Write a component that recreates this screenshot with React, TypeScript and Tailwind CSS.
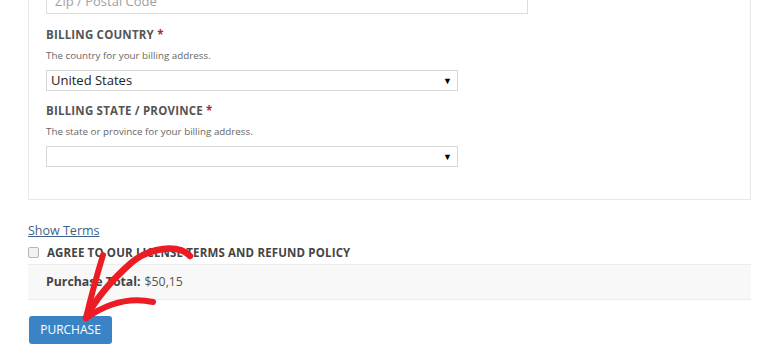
export default function App() {
  return (
    <div className="relative h-[360px] w-[775px] overflow-hidden bg-white font-['Open_Sans',sans-serif]">
      <div className="px-[28px]">
        {/* billing fieldset, top cut off by the viewport */}
        <div className="-mt-[30px] h-[230px] w-[723px] border border-[#e8e8e8] pl-[17px] pt-[19px]">
          <div className="flex h-[24px] w-[482px] items-center border border-[#dcdcdc] px-[8px] text-[13px] text-[#a0a0a0]">
            Zip / Postal Code
          </div>

          <div className="mt-[13px] text-[11.5px] font-bold leading-[16px] tracking-[0.2px] text-[#555]">
            BILLING COUNTRY <span className="text-[#b5232e]">*</span>
          </div>
          <div className="mt-[6px] text-[9.8px] leading-[14px] text-[#666]">
            The country for your billing address.
          </div>
          <div className="mt-[7px] flex h-[21px] w-[412px] items-center justify-between border border-[#d8d8d8] pl-[4px] pr-[5px] text-[13px] text-[#222]">
            <span>United States</span>
            <span className="text-[9px] text-black">▼</span>
          </div>

          <div className="mt-[12px] text-[11.5px] font-bold leading-[16px] tracking-[0.2px] text-[#555]">
            BILLING STATE / PROVINCE <span className="text-[#b5232e]">*</span>
          </div>
          <div className="mt-[6px] text-[9.8px] leading-[14px] text-[#666]">
            The state or province for your billing address.
          </div>
          <div className="mt-[7px] flex h-[21px] w-[412px] items-center justify-end border border-[#d8d8d8] pr-[5px]">
            <span className="text-[9px] text-black">▼</span>
          </div>
        </div>

        <div className="mt-[22px] text-[12.5px] leading-[18px] text-[#3f5f8c] underline">Show Terms</div>

        <div className="mt-[4px] flex items-center gap-[8px]">
          <span className="h-[11px] w-[11px] rounded-[2px] border border-[#b5b5b5] bg-[#f2f2f2]" />
          <span className="text-[11.5px] font-bold tracking-[0.15px] text-[#444]">
            AGREE TO OUR LICENSE TERMS AND REFUND POLICY
          </span>
        </div>

        <div className="mt-[3px] flex h-[36px] w-[723px] items-center border-y border-[#ececec] bg-[#f8f8f8] pl-[18px] text-[12.3px]">
          <span className="font-bold text-[#444]">Purchase Total:</span>
          <span className="ml-[4px] text-[#555]">$50,15</span>
        </div>

        <button className="ml-[1px] mt-[16px] flex h-[28px] w-[83px] items-center justify-center rounded-[3px] bg-[#3a84c5] text-[12px] text-white">
          PURCHASE
        </button>
      </div>

      {/* red hand-drawn arrow annotation */}
      <svg className="pointer-events-none absolute left-0 top-0" width="775" height="360" viewBox="0 0 775 360">
        <g fill="none" stroke="#ec1c24" strokeLinecap="round" strokeLinejoin="round">
          <path d="M190,256 C178,244 150,247 131,263 C113,279 96,298 86,318" strokeWidth="6.5" />
          <path d="M103,255 C97,275 91,296 86,318" strokeWidth="6" />
          <path d="M153,302 C135,298 112,300 86,318" strokeWidth="6" />
        </g>
      </svg>
    </div>
  );
}
